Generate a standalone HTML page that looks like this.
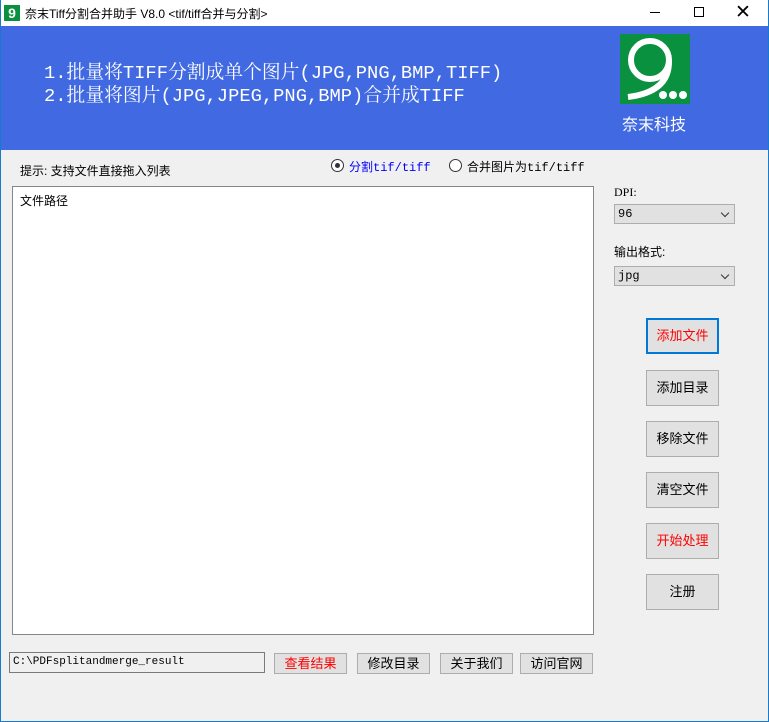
<!DOCTYPE html>
<html><head><meta charset="utf-8">
<style>
*{margin:0;padding:0;box-sizing:border-box}
body{width:769px;height:722px;overflow:hidden;background:#f0f0f0;font-family:"Liberation Sans","Noto Sans CJK SC",sans-serif;font-size:12px;color:#000;position:relative}
.abs{position:absolute}
.win{position:absolute;left:0;top:0;width:769px;height:722px;border:1px solid #1979ca;border-top:none}
.title{left:0;top:0;width:769px;height:26px;background:#fff}
.hdr{left:1px;top:26px;width:767px;height:124px;background:#4169e1}
.btn{position:absolute;width:73px;height:36px;background:#e1e1e1;border:1px solid #adadad;text-align:center;line-height:34px;font-size:13px}
.bb{position:absolute;height:21px;background:#e1e1e1;border:1px solid #adadad;text-align:center;line-height:19px;font-size:13px}
.sel{position:absolute;left:614px;width:121px;height:20px;background:#e1e1e1;border:1px solid #adadad;font-family:"Liberation Mono","Noto Sans CJK SC",monospace;font-size:12px;line-height:18px;padding-left:3px}
.sel:after{content:"";position:absolute;right:6px;top:5px;width:5px;height:5px;border-right:1px solid #333;border-bottom:1px solid #333;transform:rotate(45deg)}
.radio{position:absolute;width:13px;height:13px;border:1px solid #333;border-radius:50%;background:#fff}
</style></head><body>
<div class="abs title"></div>
<div class="abs" style="left:4px;top:5px;width:16px;height:16px;background:#0a9140;color:#fff;font-weight:bold;font-size:14px;line-height:16px;text-align:center">9</div>
<div class="abs" style="left:25px;top:5px;font-size:12px">奈末Tiff分割合并助手 V8.0 &lt;tif/tiff合并与分割&gt;</div>
<div class="abs" style="left:650px;top:12px;width:10px;height:1px;background:#000"></div>
<div class="abs" style="left:694px;top:7px;width:10px;height:10px;border:1px solid #000"></div>
<div class="abs" style="left:735px;top:0px;font-size:19px;line-height:26px">✕</div>
<div class="abs hdr"></div>
<div class="abs" style="left:44px;top:62px;color:#fff;font-family:'Liberation Mono','Noto Serif CJK SC',monospace;font-size:18.8px;line-height:23px;white-space:nowrap">1.批量将TIFF分割成单个图片(JPG,PNG,BMP,TIFF)<br>2.批量将图片(JPG,JPEG,PNG,BMP)合并成TIFF</div>
<div class="abs" style="left:620px;top:34px;width:70px;height:70px;background:#0a9140;overflow:hidden">
<svg width="70" height="70"><circle cx="30" cy="26" r="19" fill="none" stroke="#fff" stroke-width="6"/><path d="M49 26 Q50 58 8 63" fill="none" stroke="#fff" stroke-width="6"/><circle cx="43" cy="61" r="4" fill="#fff"/><circle cx="53" cy="61" r="4" fill="#fff"/><circle cx="63" cy="61" r="4" fill="#fff"/></svg></div>
<div class="abs" style="left:622px;top:111px;color:#fff;font-size:16px">奈末科技</div>
<div class="abs" style="left:20px;top:162px;font-size:12px">提示: 支持文件直接拖入列表</div>
<div class="radio" style="left:331px;top:159px"><div style="position:absolute;left:3px;top:3px;width:5px;height:5px;border-radius:50%;background:#333"></div></div>
<div class="abs" style="left:349px;top:158px;color:#0000ff;font-size:12px">分割<span style="font-family:'Liberation Mono',monospace">tif/tiff</span></div>
<div class="radio" style="left:449px;top:159px"></div>
<div class="abs" style="left:467px;top:158px;font-size:12px">合并图片为<span style="font-family:'Liberation Mono',monospace">tif/tiff</span></div>
<div class="abs" style="left:12px;top:186px;width:582px;height:449px;background:#fff;border:1px solid #828790"></div>
<div class="abs" style="left:20px;top:192px;font-size:12px">文件路径</div>
<div class="abs" style="left:614px;top:185px;font-size:12px;font-family:'Liberation Serif',serif">DPI:</div>
<div class="sel" style="top:204px">96</div>
<div class="abs" style="left:614px;top:243px;font-size:12px">输出格式:</div>
<div class="sel" style="top:266px">jpg</div>
<div class="btn" style="left:646px;top:318px;border:2px solid #0078d7;color:#f00;line-height:32px">添加文件</div>
<div class="btn" style="left:646px;top:370px">添加目录</div>
<div class="btn" style="left:646px;top:421px">移除文件</div>
<div class="btn" style="left:646px;top:472px">清空文件</div>
<div class="btn" style="left:646px;top:523px;color:#f00">开始处理</div>
<div class="btn" style="left:646px;top:574px">注册</div>
<div class="abs" style="left:9px;top:652px;width:256px;height:21px;border:1px solid #7a7a7a;background:#f0f0f0;font-family:'Liberation Mono',monospace;font-size:11px;line-height:18px;padding-left:3px">C:\PDFsplitandmerge_result</div>
<div class="bb" style="left:274px;top:653px;width:73px;color:#f00">查看结果</div>
<div class="bb" style="left:357px;top:653px;width:73px">修改目录</div>
<div class="bb" style="left:440px;top:653px;width:73px">关于我们</div>
<div class="bb" style="left:520px;top:653px;width:73px">访问官网</div>
<div class="win"></div>
</body></html>
